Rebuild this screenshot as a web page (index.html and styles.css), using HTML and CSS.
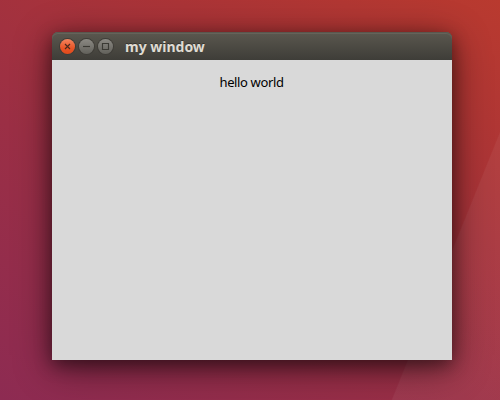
FILE: index.html
```html
<!DOCTYPE html>
<html lang="en">
<head>
<meta charset="utf-8">
<title>my window</title>
<link rel="stylesheet" href="styles.css">
</head>
<body>
<main class="desktop">
  <section class="window">
    <header class="titlebar">
      <div class="controls">
        <button class="control close" aria-label="Close"><svg viewBox="0 0 15 15"><path d="M5 5l5 5M10 5l-5 5"/></svg></button>
        <button class="control" aria-label="Minimize"><svg viewBox="0 0 15 15"><path d="M4 7.5h7"/></svg></button>
        <button class="control" aria-label="Maximize"><svg viewBox="0 0 15 15"><path d="M4.5 4.5h6v6h-6z"/></svg></button>
      </div>
      <h1 class="title">my window</h1>
    </header>
    <div class="content"><p class="message">hello world</p></div>
  </section>
</main>
</body>
</html>
```
FILE: styles.css
```css
* { box-sizing: border-box; }
body { margin: 0; }
.desktop {
  width: 500px;
  height: 400px;
  padding: 32px 48px 40px 52px;
  overflow: hidden;
  background:
    linear-gradient(112deg, transparent 83.55%, rgba(255, 255, 255, .05) 83.75%),
    linear-gradient(31deg, #8d2b52 0%, #9b2f45 40%, #ab3437 72%, #b93a2f 100%);
}
.window {
  width: 400px;
  height: 328px;
  display: flex;
  flex-direction: column;
  border-radius: 6px 6px 0 0;
  box-shadow: 0 8px 38px rgba(0, 0, 0, .48), 0 5px 17px rgba(0, 0, 0, .42);
}
.titlebar {
  height: 28px;
  flex: none;
  display: flex;
  align-items: center;
  gap: 12px;
  padding: 1px 8px 0;
  border-radius: 6px 6px 0 0;
  background: linear-gradient(#5b584f, #3e3d38);
  box-shadow: inset 0 1px #59574e, inset 0 2px #65635a;
}
.controls { display: flex; gap: 4px; }
.control {
  width: 15px;
  height: 15px;
  padding: 0;
  border: 0;
  border-radius: 50%;
  background: linear-gradient(#8b8983, #62615b);
  box-shadow: 0 0 0 1px #3f3d38;
}
.close { background: linear-gradient(#f4855f, #e95527 60%, #e04a1b); }
.control svg { display: block; width: 15px; height: 15px; fill: none; stroke: #3b3a34; stroke-width: 1.15; }
.close svg { stroke: #4c2a1d; }
.title {
  margin: 0;
  font: 700 14px/20px "Noto Sans", sans-serif;
  color: #dfdbd2;
  text-shadow: 0 -1px #35342f;
  white-space: nowrap;
}
.content {
  flex: 1;
  display: flex;
  justify-content: center;
  align-items: flex-start;
  padding: 13px 1px 0 0;
  background: #d9d9d9;
}
.message {
  margin: 0;
  font: 13px/18px "Noto Sans", sans-serif;
  letter-spacing: -.37px;
  color: #000;
}
```
